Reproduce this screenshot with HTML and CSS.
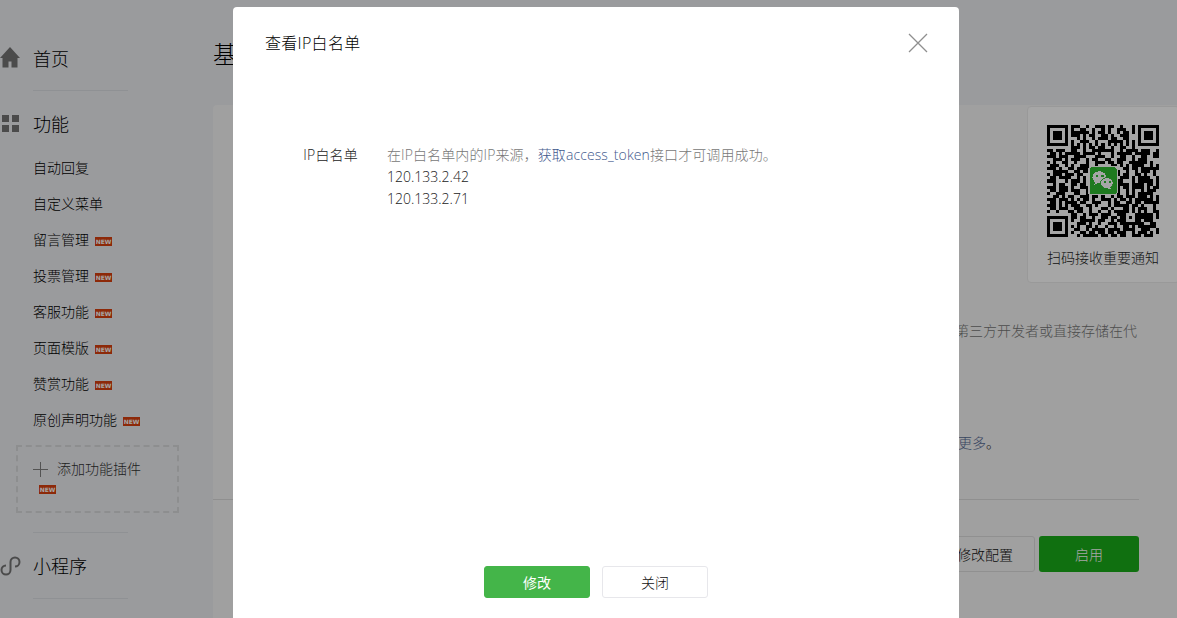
FILE: index.html
```html
<!DOCTYPE html>
<html lang="zh">
<head>
<meta charset="utf-8">
<title>查看IP白名单</title>
<link rel="stylesheet" href="styles.css">
</head>
<body>
<div class="page">
  <aside class="side">
    <div class="head">
      <svg class="head-icon" width="33" height="24" viewBox="0 0 33 24"><path class="ico" d="M10 0L0 11h2.500v9.500h6v-6h3v6h6V11H20z"/></svg>
      <span>首页</span>
    </div>
    <div class="rule rule-a"></div>
    <div class="head head-b">
      <svg class="head-icon" width="33" height="24" viewBox="0 0 33 24"><path class="ico" d="M2 3h7v7H2zM12 3h7v7h-7zM2 13h7v7H2zM12 13h7v7h-7z"/></svg>
      <span>功能</span>
    </div>
    <ul class="items">
      <li>自动回复</li>
      <li>自定义菜单</li>
      <li>留言管理<i class="new">NEW</i></li>
      <li>投票管理<i class="new">NEW</i></li>
      <li>客服功能<i class="new">NEW</i></li>
      <li>页面模版<i class="new">NEW</i></li>
      <li>赞赏功能<i class="new">NEW</i></li>
      <li>原创声明功能<i class="new">NEW</i></li>
    </ul>
    <div class="plugin">
      <div class="plugin-row">
        <svg width="15" height="15" viewBox="0 0 15 15"><path class="plus" d="M7.500 0v15M0 7.500h15"/></svg>
        <span>添加功能插件</span>
      </div>
      <i class="new new-block">NEW</i>
    </div>
    <div class="rule rule-c"></div>
    <div class="head head-b">
      <svg class="head-icon" width="33" height="24" viewBox="0 0 33 24"><path class="link" d="M10.500 8v8a4.500 4.500 0 1 1-4.500-4.500M10.500 15V8a4.500 4.500 0 1 1 4.500 4.500"/></svg>
      <span>小程序</span>
    </div>
    <div class="rule rule-d"></div>
  </aside>
  <main class="main">
    <h1 class="title">基</h1>
    <section class="card">
      <p class="desc">第三方开发者或直接存储在代</p>
      <p class="more"><a>更多</a>。</p>
      <div class="sep"></div>
      <div class="actions">
        <button class="btn-plain">修改配置</button>
        <button class="btn-green">启用</button>
      </div>
    </section>
  </main>
  <div class="qr-panel">
    <svg class="qr" width="112" height="112" viewBox="0 0 37 37" shape-rendering="crispEdges">
      <path class="qr-f" d="M0 0h7v7H0zM1 1v5h5V1zM2 2h3v3H2zM30 0h7v7h-7zM31 1v5h5V1zM32 2h3v3h-3zM0 30h7v7H0zM1 31v5h5v-5zM2 32h3v3H2z" fill-rule="evenodd"/>
      <path class="qr-d" d="M9 .5h2m2 0h1m2 0h3m1 0h2m2 0h1M8 1.500h1m2 0h2m2 0h1m2 0h1m1 0h1m2 0h3M9 2.500h3m1 0h1m3 0h1m2 0h1m2 0h1m1 0h1M8 3.500h2m2 0h1m1 0h2m2 0h2m1 0h1m2 0h2M10 4.500h1m1 0h1m2 0h1m1 0h3m2 0h1m2 0h1M8 5.500h1m2 0h3m2 0h1m3 0h1m1 0h3m1 0h1M8 6.500h1m1 0h1m1 0h1m1 0h1m1 0h1m1 0h1m1 0h1m1 0h1m1 0h1m1 0h1M9 7.500h2m3 0h1m2 0h2m2 0h1m3 0h1M0 8.500h2m1 0h3m2 0h2m2 0h1m3 0h2m1 0h3m2 0h1m2 0h3m2 0h2M1 9.500h1m2 0h1m2 0h3m2 0h3m2 0h1m3 0h1m1 0h3m1 0h1m1 0h2m1 0h1M0 10.500h3m1 0h2m3 0h1m1 0h2m3 0h3m2 0h1m2 0h2m2 0h1m2 0h2M2 11.500h2m2 0h1m1 0h3m2 0h1m1 0h2m2 0h2m2 0h3m2 0h1m1 0h2M0 12.500h1m1 0h1m2 0h2m2 0h1m3 0h1m2 0h3m1 0h2m1 0h2m2 0h3m1 0h1M1 13.500h3m2 0h1m1 0h1m2 0h3m2 0h1m4 0h2m1 0h1m1 0h1m1 0h2m1 0h1M0 14.500h2m2 0h1m2 0h2m1 0h2m1 0h1m8 0h1m2 0h2m1 0h2m2 0h1M2 15.500h2m1 0h2m2 0h1m2 0h2m8 0h2m2 0h1m2 0h1m1 0h2M0 16.500h1m2 0h1m2 0h3m1 0h2m10 0h2m1 0h2m2 0h2m1 0h1M1 17.500h2m2 0h3m2 0h1m1 0h1m9 0h1m2 0h2m1 0h1m2 0h3M0 18.500h3m3 0h1m2 0h2m1 0h1m9 0h3m3 0h1m1 0h2m1 0h1M2 19.500h1m1 0h2m3 0h1m1 0h2m8 0h1m1 0h4m1 0h2m3 0h1M0 20.500h2m2 0h2m2 0h1m2 0h1m1 0h1m9 0h1m1 0h1m2 0h1m1 0h2m1 0h1M1 21.500h2m2 0h1m2 0h3m2 0h2m8 0h1m2 0h1m1 0h1m2 0h1m1 0h2M0 22.500h1m2 0h3m3 0h1m3 0h1m7 0h3m2 0h1m3 0h1m2 0h2M2 23.500h2m1 0h1m1 0h2m2 0h3m1 0h2m1 0h1m2 0h1m1 0h2m1 0h3m1 0h2M0 24.500h2m2 0h3m3 0h1m2 0h1m1 0h1m2 0h3m1 0h1m2 0h1m1 0h1m2 0h2M1 25.500h1m2 0h1m2 0h3m1 0h2m2 0h3m2 0h1m1 0h2m2 0h2m1 0h2m1 0h1M0 26.500h3m1 0h1m1 0h1m2 0h1m3 0h2m1 0h1m3 0h1m1 0h5m1 0h2M1 27.500h2m2 0h2m2 0h3m2 0h1m3 0h2m1 0h1m3 0h1m2 0h1m1 0h2M0 28.500h1m2 0h1m3 0h2m1 0h2m2 0h1m2 0h1m2 0h1m1 0h5m1 0h1m1 0h1M8 29.500h2m2 0h1m1 0h3m2 0h2m2 0h1m1 0h1m3 0h1m1 0h3M9 30.500h1m1 0h2m2 0h1m3 0h1m1 0h2m2 0h1m1 0h1m1 0h1m1 0h2M8 31.500h1m2 0h1m1 0h3m1 0h2m2 0h1m1 0h1m1 0h1m3 0h1m2 0h2M10 32.500h2m2 0h1m2 0h1m2 0h3m1 0h2m1 0h5m2 0h1M8 33.500h1m1 0h1m2 0h2m1 0h1m2 0h1m2 0h1m2 0h2m3 0h1m1 0h3M9 34.500h2m2 0h1m2 0h3m1 0h1m1 0h2m1 0h1m1 0h2m2 0h1m1 0h1M8 35.500h1m2 0h2m1 0h1m2 0h1m2 0h2m1 0h3m2 0h1m1 0h3M10 36.500h1m1 0h3m1 0h1m1 0h2m2 0h1m1 0h2m2 0h2m2 0h2"/>
      <path class="qr-d" d="M36.500 8v3m0 2v2m0 2v4m0 2v3m0 2v3m0 3v2m0 2v2M35.500 9v2m0 3v3m0 3v2m0 3v4m0 3v2m0 3v2M34.500 12v3m0 3v2m0 3v3m0 3v4m0 2v2M33.500 8v2m0 4v2m0 3v3m0 2v2m0 3v3m0 4v2M32.500 10v3m0 4v2m0 3v3m0 2v4m0 3v3M31.500 8v3m0 3v2m0 3v4m0 3v2m0 4v3M30.500 11v3m0 3v3m0 4v2m0 2v4m0 3v2M29.500 8v2m0 3v2m0 4v2m0 3v3m0 3v3M28.500 0v3m0 2v3m0 3v2m0 4v2m0 3v2m0 3v2m0 3v2m0 3v2M26.500 2v3m0 3v2m0 4v3m0 3v2m0 4v3m0 3v3M24.500 0v2m0 3v3m0 4v2m0 3v3m0 3v2m0 3v4M12.500 1v3m0 3v3m0 3v2m0 3v3m0 3v2m0 3v4M10.500 3v2m0 4v3m0 3v3m0 3v2m0 3v3m0 3v3M8.500 0v3m0 3v4m0 3v2m0 3v3m0 3v3m0 3v2M6.500 9v3m0 3v2m0 3v2m0 3v3M4.500 10v2m0 3v3m0 2v3m0 2v3M2.500 9v2m0 3v3m0 3v2m0 2v3M15.500 2v3m0 2v3m0 20v2m0 2v3M18.500 0v3m0 3v3m0 20v3m0 2v2M21.500 3v3m0 2v3m0 19v3m0 1v3"/>
      <rect class="logo-edge" x="13.700" y="13.600" width="9.600" height="9.600" rx=".6"/>
      <rect class="logo-bg" x="14.200" y="14" width="8.800" height="8.800" rx=".5"/>
      <ellipse class="logo-w" cx="17.300" cy="17.300" rx="2.300" ry="2"/>
      <path class="logo-w" d="M16 18.500l-.4 1.300 1.500-.8z"/>
      <ellipse class="logo-w2" cx="19.800" cy="19.200" rx="2.100" ry="1.800"/>
      <path class="logo-w" d="M20.800 20.500l.6 1-1.500-.7z"/>
      <path class="logo-e" d="M16.100 16.400h.7v.7h-.7zM18 16.400h.7v.7H18zM18.800 18.500h.6v.6h-.6zM20.400 18.500h.6v.6h-.6z"/>
    </svg>
    <p class="qr-text">扫码接收重要通知</p>
  </div>
  <div class="mask"></div>
  <div class="dialog">
    <header class="dialog-head">
      <h2>查看IP白名单</h2>
      <svg class="close" width="20" height="20" viewBox="0 0 20 20"><path d="M1 1l18 18M19 1L1 19"/></svg>
    </header>
    <div class="form-row">
      <label>IP白名单</label>
      <div class="form-value">
        <p class="tip">在IP白名单内的IP来源，<a>获取access_token</a>接口才可调用成功。</p>
        <p>120.133.2.42</p>
        <p>120.133.2.71</p>
      </div>
    </div>
    <footer class="dialog-foot">
      <button class="d-primary">修改</button>
      <button class="d-default">关闭</button>
    </footer>
  </div>
</div>
</body>
</html>
```
FILE: styles.css
```css
* { box-sizing: border-box; }
html, body { margin: 0; height: 100%; overflow: hidden; }
body {
  font-family: "Open Sans", "Noto Sans CJK SC", sans-serif;
  font-size: 14px;
  font-weight: 300;
  color: #111;
}
p, h1, h2, ul { margin: 0; padding: 0; font-weight: 300; }
i { font-style: normal; }
button { font-family: inherit; font-size: 14px; font-weight: 300; padding: 0; }

.page {
  position: relative;
  display: flex;
  width: 1177px;
  height: 618px;
  overflow: hidden;
  background: #edeef2;
}

/* sidebar */
.side { width: 213px; flex: none; padding-top: 47px; color: #000; }
.head {
  display: flex;
  align-items: center;
  height: 24px;
  font-size: 18px;
  line-height: 24px;
}
.head-b { margin-top: 21px; }
.head-icon { flex: none; display: block; }
.ico { fill: #747474; }
.link { fill: none; stroke: #747474; stroke-width: 2; }
.rule { width: 95px; height: 1px; margin-left: 33px; background: #dcdfe3; }
.rule-a { margin-top: 19px; }
.rule-c { margin-top: 19px; }
.rule-d { margin-top: 20px; }
.items { list-style: none; margin-top: 14px; padding-left: 33px; }
.items li { height: 36px; line-height: 36px; white-space: nowrap; }
.new {
  display: inline-block;
  width: 17px;
  height: 9px;
  margin-left: 6px;
  background: #d9400f;
  color: #fff;
  font-family: "DejaVu Sans", sans-serif;
  font-size: 6px;
  font-weight: 700;
  line-height: 9px;
  letter-spacing: -.1px;
  text-align: center;
  vertical-align: 1px;
}
.new-block { display: block; margin: 8px 0 0 6px; }
.plugin {
  width: 163px;
  height: 68px;
  margin: 7px 0 0 16px;
  padding: 14px 0 0 15px;
  border: 2px dashed #d9dadc;
}
.plugin-row { display: flex; align-items: center; gap: 9px; height: 16px; color: #333; line-height: 16px; }
.plus { fill: none; stroke: #808080; stroke-width: 1; }
.plugin-row svg { flex: none; }

/* main */
.main { flex: 1; min-width: 0; }
.title { height: 36px; margin-top: 36px; font-size: 24px; line-height: 36px; color: #000; }
.card {
  height: 520px;
  margin-top: 33px;
  padding: 215px 38px 0 0;
  background: #f6f6f6;
  border-radius: 4px 0 0 0;
}
.desc {
  height: 22px;
  padding-right: 2px;
  color: #777;
  line-height: 22px;
  text-align: right;
  white-space: nowrap;
}
.more { margin: 90px 0 0 745px; line-height: 22px; color: #222; white-space: nowrap; }
.more a { color: #576b95; }
.sep { height: 1px; margin-top: 45px; background: #dcdcdc; }
.actions { display: flex; justify-content: flex-end; gap: 4px; margin-top: 36px; }
.btn-plain {
  width: 100px;
  height: 36px;
  background: #f6f6f6;
  border: 1px solid #dedede;
  border-radius: 3px;
  color: #111;
}
.btn-green {
  width: 100px;
  height: 36px;
  background: #1aad19;
  border: 0;
  border-radius: 3px;
  color: #fff;
}

/* QR panel */
.qr-panel {
  position: absolute;
  left: 1027px;
  top: 106px;
  width: 153px;
  height: 177px;
  padding: 18px 0 0 19px;
  background: #fff;
  border: 1px solid #ebebeb;
  border-radius: 4px;
}
.qr { display: block; }
.qr-f { fill: #000; }
.qr-d { fill: none; stroke: #000; stroke-width: 1; }
.logo-edge { fill: #fff; }
.logo-bg { fill: #2ebc30; }
.logo-w { fill: #fff; }
.logo-w2 { fill: #fff; stroke: #2ebc30; stroke-width: .3; }
.logo-e { fill: #2ebc30; }
.qr-text { margin-top: 10px; width: 112px; font-size: 14px; line-height: 22px; color: #222; white-space: nowrap; }

/* mask + dialog */
.mask { position: absolute; inset: 0; background: rgba(0, 0, 0, .35); }
.dialog {
  position: absolute;
  left: 233px;
  top: 7px;
  width: 726px;
  height: 640px;
  background: #fff;
  border-radius: 4px;
}
.dialog-head {
  display: flex;
  justify-content: space-between;
  align-items: center;
  height: 72px;
  padding: 0 31px 0 32px;
}
.dialog-head h2 { font-size: 16px; line-height: 72px; letter-spacing: .3px; color: #000; }
.close { fill: none; stroke: #8f8f8f; stroke-width: 1.300; }
.form-row { display: flex; margin-top: 65px; line-height: 22px; }
.form-row label { width: 125px; text-align: right; letter-spacing: .2px; color: #222; }
.form-value { margin-left: 29px; color: #222; }
.tip { color: #777; letter-spacing: .1px; }
.tip a { color: #41588c; }
.dialog-foot {
  position: absolute;
  left: 0;
  right: 0;
  top: 559px;
  display: flex;
  justify-content: center;
  gap: 12px;
}
.d-primary, .d-default { width: 106px; height: 32px; border-radius: 3px; }
.d-primary { background: #44b549; border: 1px solid #44b549; color: #fff; font-weight: 400; }
.d-default { background: #fff; border: 1px solid #e7e7eb; color: #111; }
```
